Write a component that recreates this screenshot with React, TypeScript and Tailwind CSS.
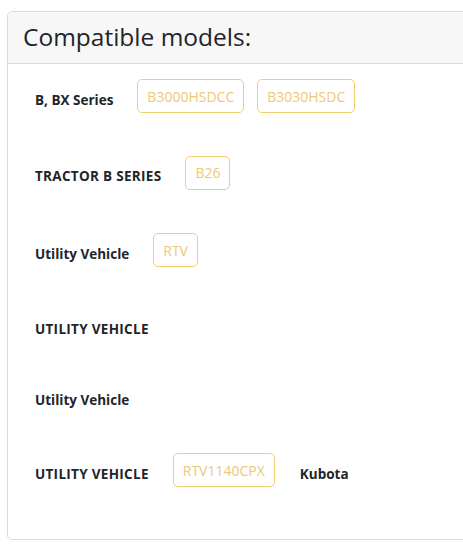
const rows: { label: string; models: string[]; extra?: string; h: string; caps?: boolean }[] = [
  { label: "B, BX Series", models: ["B3000HSDCC", "B3030HSDC"], h: "h-[76px]" },
  { label: "TRACTOR B SERIES", models: ["B26"], h: "h-[77px]", caps: true },
  { label: "Utility Vehicle", models: ["RTV"], h: "h-[78px]" },
  { label: "UTILITY VEHICLE", models: [], h: "h-[72px]", caps: true },
  { label: "Utility Vehicle", models: [], h: "h-[70px]" },
  { label: "UTILITY VEHICLE", models: ["RTV1140CPX"], extra: "Kubota", h: "h-[78px]", caps: true },
];

export default function App() {
  return (
    <div className="h-[551px] w-[463px] overflow-hidden bg-white pl-[7px] pt-[11px] font-['Open_Sans',sans-serif]">
      <div className="w-[480px] rounded-[5px] border border-[#dadada]">
        <div className="flex h-[52px] items-center rounded-t-[5px] border-b border-[#dadada] bg-[#f7f7f7] px-[15px]">
          <h2 className="text-[24.5px] font-normal leading-none text-[#212529]">
            Compatible models:
          </h2>
        </div>
        <div className="-mt-[2px] pb-[26px] pl-[27px]">
          {rows.map((row, i) => (
            <div key={i} className={`flex items-center ${row.h}`}>
              <span
                className={`mr-[24px] text-[13.5px] font-bold text-[#212529] ${row.caps ? "tracking-[0.3px]" : ""}`}
              >
                {row.label}
              </span>
              {row.models.map((m) => (
                <span
                  key={m}
                  className="mb-[8px] mr-[13px] flex h-[34px] items-center rounded-[5px] border border-[#f0cf6e] px-[9px] text-[14px] text-[#ecc877]"
                >
                  {m}
                </span>
              ))}
              {row.extra && (
                <span className="ml-[12px] text-[13.5px] font-bold text-[#212529]">
                  {row.extra}
                </span>
              )}
            </div>
          ))}
        </div>
      </div>
    </div>
  );
}
